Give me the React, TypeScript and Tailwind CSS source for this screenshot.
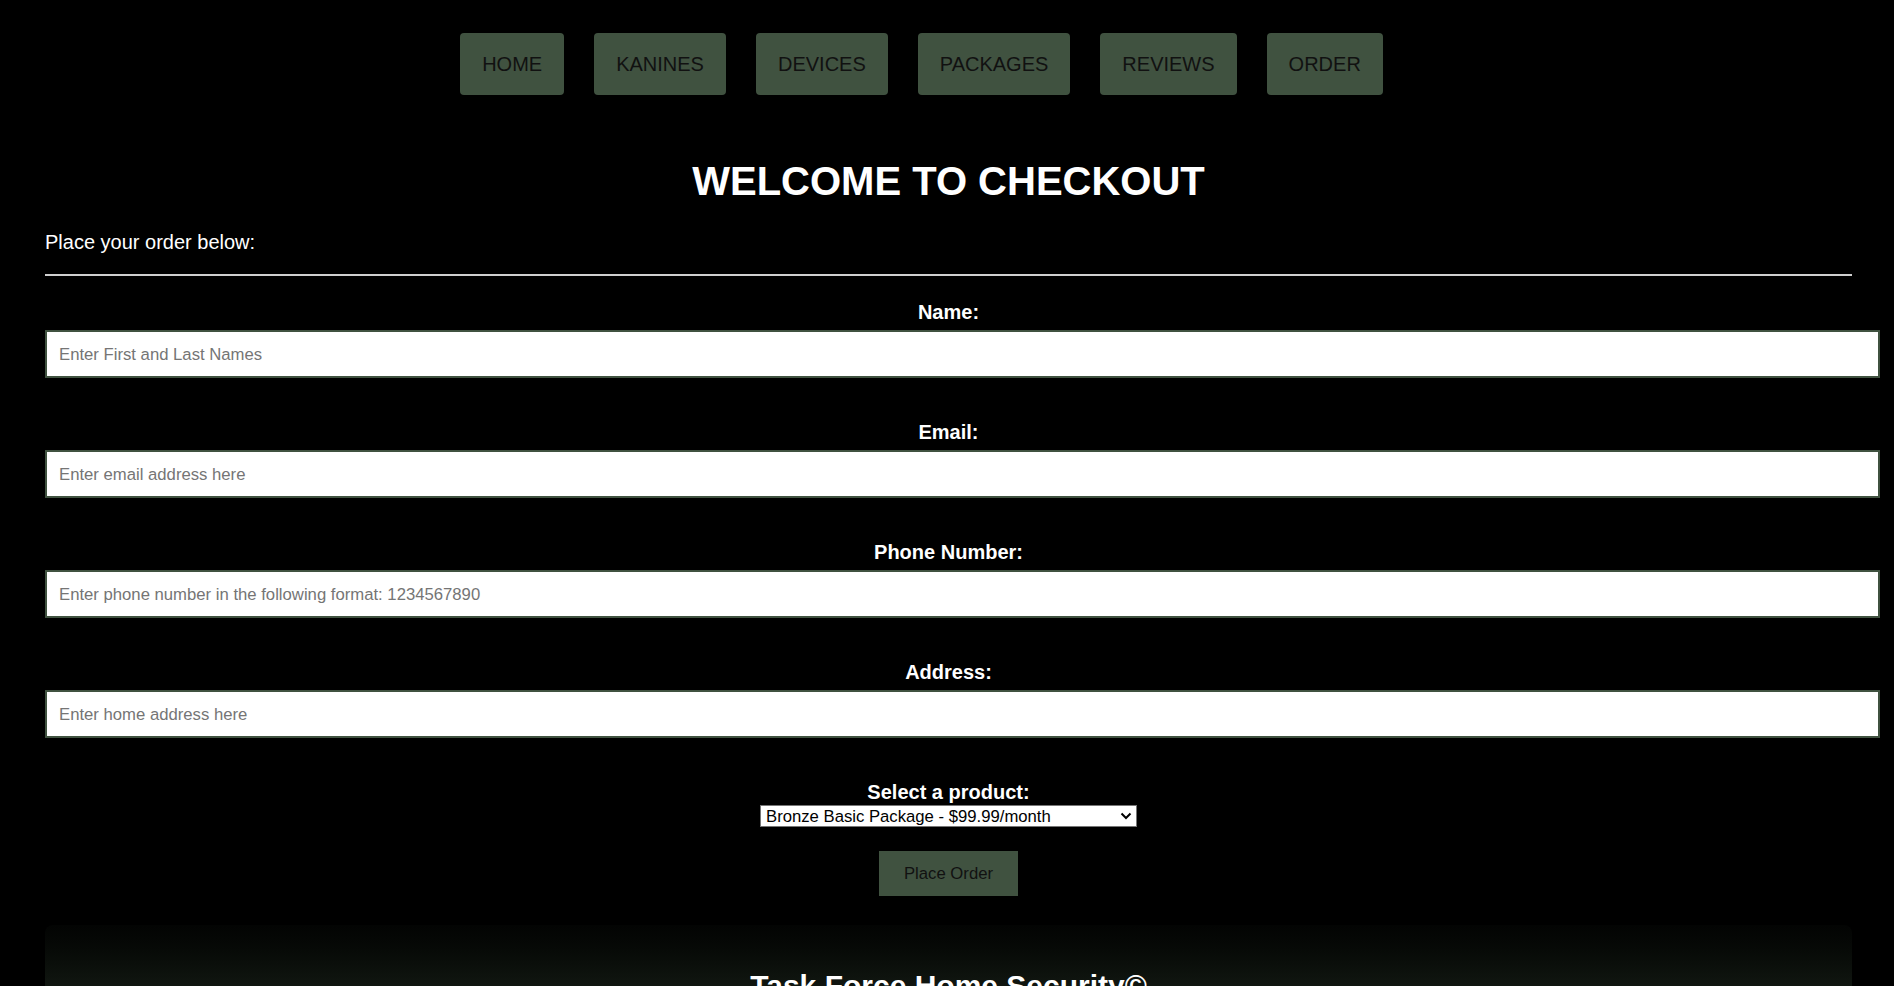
import React from "react";

const navItems = ["HOME", "KANINES", "DEVICES", "PACKAGES", "REVIEWS", "ORDER"];

const fields = [
  { label: "Name:", placeholder: "Enter First and Last Names", type: "text" },
  { label: "Email:", placeholder: "Enter email address here", type: "email" },
  { label: "Phone Number:", placeholder: "Enter phone number in the following format: 1234567890", type: "tel" },
  { label: "Address:", placeholder: "Enter home address here", type: "text" },
];

export default function App() {
  return (
    <div className="min-h-screen bg-black text-white font-['Liberation_Sans',Arial,sans-serif]">
      <nav className="flex justify-center gap-[30px] pt-[33px] pr-[51px]">
        {navItems.map((item) => (
          <a
            key={item}
            href="#"
            className="flex h-[62px] items-center rounded-[4px] bg-[#405240] px-[22px] text-[20px] leading-[23px] text-[#111111]"
          >
            {item}
          </a>
        ))}
      </nav>

      <main className="pl-[45px] pr-[42px]">
        <h1 className="mt-[63px] text-center text-[40px] font-bold leading-[46px] text-white">
          WELCOME TO CHECKOUT
        </h1>
        <p className="mt-[27px] text-[20px] leading-[23px] text-white">Place your order below:</p>
        <div className="mt-[20px] h-[2px] bg-[#cfcfcf]" />

        <form onSubmit={(e) => e.preventDefault()}>
          {fields.map((f, i) => (
            <div key={f.label} className={i === 0 ? "mt-[25px]" : "mt-[43px]"}>
              <label className="block text-center text-[20px] font-bold leading-[23px] text-white">
                {f.label}
              </label>
              <input
                type={f.type}
                placeholder={f.placeholder}
                className="mt-[6px] box-border block h-[48px] w-[calc(100%+28px)] max-w-none border-2 border-[#405240] bg-white px-[12px] pt-[2px] text-[16.7px] text-black outline-none placeholder:text-[#757575]"
              />
            </div>
          ))}

          <div className="mt-[43px]">
            <label className="block text-center text-[20px] font-bold leading-[23px] text-white">
              Select a product:
            </label>
            <div className="relative mx-auto mt-[1px] w-[377px]">
              <select
                defaultValue="bronze"
                className="block h-[22px] w-full appearance-none rounded-none border border-[#767676] bg-white pl-[5px] pr-[20px] pt-[1px] text-[16.7px] leading-[19px] text-black outline-none"
              >
                <option value="bronze">Bronze Basic Package - $99.99/month</option>
                <option value="silver">Silver Package</option>
                <option value="gold">Gold Package</option>
              </select>
              <svg
                className="pointer-events-none absolute right-[5px] top-[7px]"
                width="12"
                height="8"
                viewBox="0 0 12 8"
              >
                <polyline points="1.5,1.5 6,6 10.5,1.5" fill="none" stroke="#000" strokeWidth="2" />
              </svg>
            </div>
          </div>

          <div className="mt-[24px] flex justify-center">
            <button
              type="submit"
              className="h-[45px] bg-[#405240] px-[25px] text-[16.7px] text-[#111111]"
            >
              Place Order
            </button>
          </div>
        </form>
      </main>

      <footer className="ml-[45px] mr-[42px] mt-[29px] h-[160px] rounded-t-[8px] bg-linear-to-b from-[#030403] to-[#2e3b2e] pt-[44px]">
        <h2 className="text-center text-[30px] font-bold leading-[34px] text-white">
          Task Force Home Security©
        </h2>
      </footer>
    </div>
  );
}
